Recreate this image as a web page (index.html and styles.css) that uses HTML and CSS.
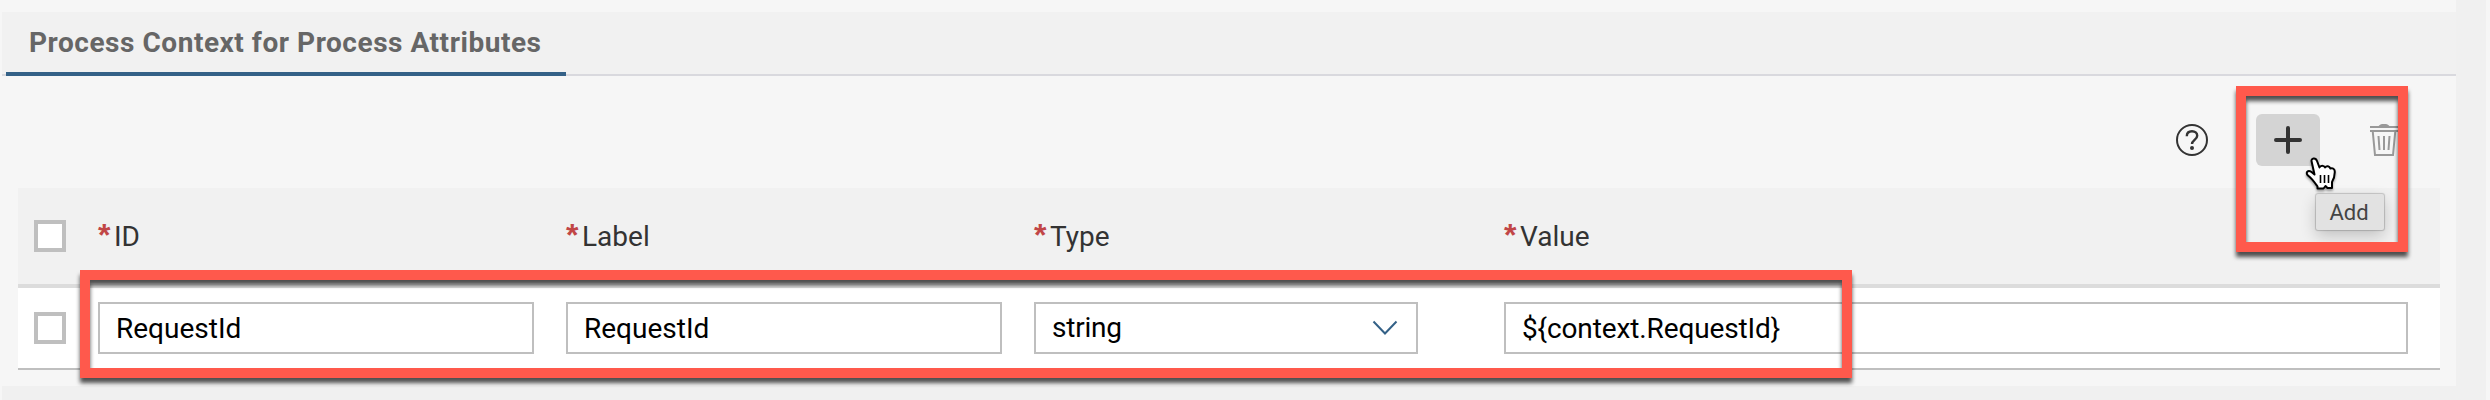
FILE: index.html
```html
<!DOCTYPE html>
<html lang="en">
<head>
<meta charset="utf-8">
<title>Process Context for Process Attributes</title>
<link rel="stylesheet" href="styles.css">
</head>
<body>
<div class="page">
  <main class="panel">
    <header class="tabs"><div class="tab">Process Context for Process Attributes</div></header>
    <div class="toolbar">
      <svg class="help" width="32" height="32" viewBox="0 0 32 32" fill="none" stroke="#333" role="img" aria-label="Help">
        <circle cx="16" cy="16" r="15" stroke-width="2"/>
        <path d="M10.800 12.200c0-3.200 2.200-4.900 5.200-4.900s5.200 1.800 5.200 4.400c0 4-5.200 4.300-5.200 8.300" stroke-width="2.400"/>
        <circle cx="16" cy="24" r="2" fill="#333" stroke="none"/>
      </svg>
      <button class="add" aria-label="Add">
        <svg width="28" height="28" viewBox="0 0 28 28" stroke="#333" stroke-width="4" stroke-linecap="round"><path d="M14 2v24M2 14h24"/></svg>
      </button>
      <svg class="trash" width="28" height="32" viewBox="0 0 28 32" fill="none" stroke="#999" stroke-width="2" role="img" aria-label="Delete">
        <path d="M0 3h28M0 7h28M2.800 8l2.200 23h18l2.200-23M8.500 12l1 14M14 12v14M19.500 12l-1 14"/>
        <path d="M8.500 2.300c1-1.700 2.500-2.300 5.500-2.300s4.500.6 5.500 2.300z" fill="#999" stroke="none"/>
      </svg>
    </div>
    <section class="table">
      <div class="row head">
        <span class="check"></span>
        <div class="label"><b>*</b>ID</div>
        <div class="label"><b>*</b>Label</div>
        <div class="label"><b>*</b>Type</div>
        <div class="label"><b>*</b>Value</div>
      </div>
      <div class="row item">
        <span class="check"></span>
        <div class="field">RequestId</div>
        <div class="field">RequestId</div>
        <div class="field select">string
          <svg width="26" height="16" viewBox="0 0 26 16" fill="none" stroke="#346187" stroke-width="2"><path d="M1.500 1.500L13 13.500L24.500 1.500"/></svg>
        </div>
        <div class="field">${context.RequestId}</div>
      </div>
    </section>
  </main>
</div>
<div class="tooltip">Add</div>
<svg class="cursor" width="32" height="34" viewBox="0 0 32 34">
  <path d="M6.500 4C6 1.500 10.500 0 12 4L14.500 10.500C15.500 8 19 8 20 10.500C21.500 8.500 24.500 9 25.300 11.500C27.500 10.500 30 12 29.800 15C29.700 19 29 22 27 25V31H22.500L20.500 29L18.500 31.500H12.500V29.500C10 26 7.500 22 3 18.500C0 15.500 3 12.500 6.500 15L9.500 17.500Z" fill="#fff" stroke="#000" stroke-width="2" stroke-linejoin="round"/>
  <path d="M15.500 18v8M19.500 18v8M23.500 18v8" stroke="#000" stroke-width="1.600"/>
</svg>
<div class="mark mark-row"></div>
<div class="mark mark-add"></div>
</body>
</html>
```

FILE: styles.css
```css
* { box-sizing: border-box; }
body {
  margin: 0;
  height: 400px;
  overflow: hidden;
  position: relative;
  background: #f6f6f6;
  font-family: Roboto, "Liberation Sans", sans-serif;
  font-size: 28px;
  color: #333;
}
.page {
  height: 400px;
  margin: 0 4px 0 2px;
  padding-right: 30px;
  background: #f0f0f0;
}
.panel { height: 386px; padding-top: 12px; background: #f6f6f6; }
.tabs {
  height: 64px;
  padding-left: 4px;
  background: #f1f1f1;
  box-shadow: inset 0 -2px #d9d9de;
  display: flex;
}
.tab {
  width: 560px;
  padding-left: 23px;
  border-bottom: 4px solid #346187;
  line-height: 62px;
  font-weight: 700;
  letter-spacing: 0.54px;
  color: #666;
  white-space: nowrap;
}
.toolbar {
  height: 112px;
  padding: 12px 58px 0 0;
  display: flex;
  justify-content: flex-end;
  align-items: flex-start;
}
.help { margin: 36px 48px 0 0; }
.add {
  width: 64px;
  height: 52px;
  margin: 26px 50px 0 0;
  padding: 0;
  border: 0;
  border-radius: 6px;
  background: #d4d4d4;
  display: grid;
  place-items: center;
}
.trash { margin-top: 36px; }
.table { margin: 0 16px; }
.row {
  display: grid;
  grid-template-columns: 32px 436px 436px 384px 904px;
  column-gap: 32px;
  padding-left: 16px;
  align-items: center;
}
.row > :last-child { margin-left: 54px; margin-right: -54px; }
.head { height: 100px; background: #f1f1f1; border-bottom: 4px solid #dcdcdc; }
.item { height: 82px; background: #fff; border-bottom: 2px solid #bfbfbf; }
.check { width: 32px; height: 32px; border: 4px solid #bfbfbf; background: #fff; }
.label { height: 40px; line-height: 42px; }
.label b {
  display: inline-block;
  width: 16px;
  font: 700 32px/32px "Liberation Sans", sans-serif;
  color: #c14646;
}
.field {
  height: 52px;
  padding: 0 16px;
  border: 2px solid #bfbfbf;
  line-height: 50px;
  color: #000;
}
.row > .field:last-child { letter-spacing: -0.12px; }
.select {
  display: flex;
  justify-content: space-between;
  align-items: center;
  padding-right: 18px;
  letter-spacing: -0.2px;
}
.tooltip {
  position: absolute;
  left: 2316px;
  top: 194px;
  width: 68px;
  height: 36px;
  padding-right: 2px;
  border-radius: 2px;
  background: #e2e2e2;
  box-shadow: 0 0 1px 1px rgba(0,0,0,.18), 0 6px 16px rgba(0,0,0,.2);
  font: 22px/37px Roboto, sans-serif;
  text-align: center;
  color: #444;
}
.cursor { position: absolute; left: 2305px; top: 157px; filter: drop-shadow(0 2px 1px rgba(0,0,0,.35)); }
.mark { position: absolute; border: 10px solid #ff594c; filter: drop-shadow(0 5px 2px rgba(0,0,0,.68)); }
.mark-row { left: 80px; top: 270px; width: 1772px; height: 108px; }
.mark-add { left: 2236px; top: 86px; width: 172px; height: 166px; }
```
